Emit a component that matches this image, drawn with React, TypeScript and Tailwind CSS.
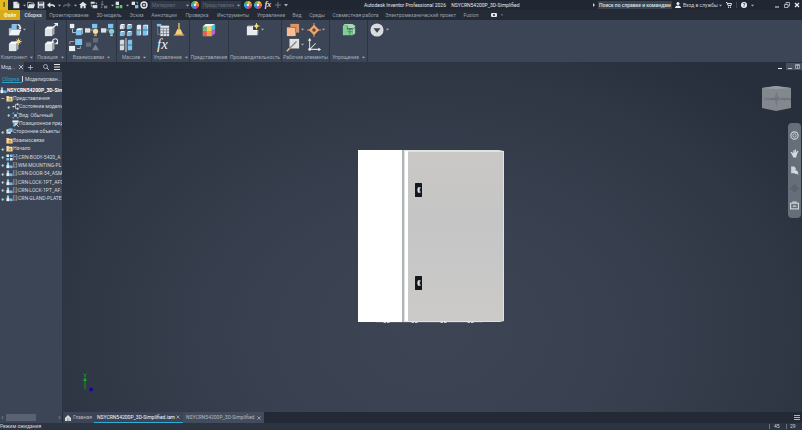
import type { ReactNode } from "react";

type IconProps = { className?: string; box?: string; children: ReactNode };

function Svg({ className = "size-4", box = "0 0 16 16", children }: IconProps) {
  return (
    <svg className={`shrink-0 ${className}`} viewBox={box} fill="none" aria-hidden="true">
      {children}
    </svg>
  );
}

function Caret({ className = "size-1" }: { className?: string }) {
  return (
    <Svg className={className} box="0 0 4 4">
      <path d="M0 1h4L2 3.4z" fill="#aab1bc" />
    </Svg>
  );
}

function Wheel() {
  return (
    <Svg className="size-2" box="0 0 10 10">
      <path d="M5 5V0a5 5 0 0 1 4.4 2.6z" fill="#f2c230" />
      <path d="M5 5l4.400-2.400a5 5 0 0 1 0 4.800z" fill="#ef7d36" />
      <path d="M5 5l4.400 2.400A5 5 0 0 1 5 10z" fill="#d8447c" />
      <path d="M5 5v5A5 5 0 0 1 .6 7.400z" fill="#4c7fe0" />
      <path d="M5 5L.6 7.400a5 5 0 0 1 0-4.800z" fill="#3dbad0" />
      <path d="M5 5L.6 2.600A5 5 0 0 1 5 0z" fill="#62c25a" />
      <circle cx="5" cy="5" r="1.500" fill="#eef1f4" />
    </Svg>
  );
}

function Cube({ x, y, s, c = "#dfe3e6" }: { x: number; y: number; s: number; c?: string }) {
  return (
    <g transform={`translate(${x} ${y}) scale(${s})`}>
      <path d="M0 2.500h7.500V10H0z" fill={c} />
      <path d="M0 2.500L2.500 0H10L7.500 2.500z" fill="#f7f8f9" />
      <path d="M7.500 2.500L10 0v7.500L7.500 10z" fill="#a4abb2" />
    </g>
  );
}

const BLUE = "#7cc4ee";

const quickIcons: { name: string; w: string; art: ReactNode; caret?: boolean }[] = [
  { name: "Создать", w: "w-[15px]", caret: true, art: <><path d="M2 1h6l3 3v7H2z" fill="#e4e7ea" /><path d="M8 1v3h3" stroke="#7f8791" /></> },
  { name: "Открыть", w: "w-[10px]", art: <><path d="M1 10V2h4l1 1h4v2" stroke="#dfe3e7" /><path d="M3 5h9l-2 6H1z" fill="#dfe3e7" /></> },
  { name: "Сохранить", w: "w-[10px]", art: <><path d="M1 1h9l1 1v9H1z" fill="#d8dce0" /><path d="M3 1h6v3H3zM3 7h6v4H3z" fill="#586270" /></> },
  { name: "Отменить", w: "w-4", caret: true, art: <><path d="M3 6h5q3 0 3 3" stroke="#e4e7ea" strokeWidth="2" /><path d="M0 6l5-4v8z" fill="#e4e7ea" /></> },
  { name: "Повторить", w: "w-4", caret: true, art: <><path d="M9 6H4Q1 6 1 9" stroke="#596170" strokeWidth="2" /><path d="M12 6L7 2v8z" fill="#596170" /></> },
  { name: "Главная", w: "w-[11px]", art: <><path d="M0 6l6-5 6 5H10v5H7V8H5v3H2V6z" fill="#dfe3e7" /></> },
  { name: "Копировать", w: "w-[10px]", art: <><path d="M1 1h6v3H1zM4 6h7v5H4z" fill="#d8dce0" /><path d="M2 5v3h2M8 3h2v2" stroke="#d8dce0" /></> },
  { name: "Параметры", w: "w-[15px]", caret: true, art: <><path d="M5 1H3v9H1M1 5h5" stroke="#8d95a0" /><path d="M6 7h5v4H6z" fill="#747d89" /></> },
  { name: "Выбор", w: "w-4", caret: true, art: <><path d="M1 1h5v5H1z" fill="#dbe0e4" /><path d="M1 7h5v4H1zM7 6h4v5H7z" fill="#68bd7a" /></> },
  { name: "Обновить", w: "w-[9px]", art: <><path d="M1 1h5v5H1z" fill="#e4e7ea" /><path d="M6 6h5v5H6z" fill={BLUE} /><path d="M7 2h3v3" stroke={BLUE} /></> },
  { name: "Настройки", w: "w-[10px]", art: <><circle cx="6" cy="6" r="4.500" stroke="#e4e7ea" strokeWidth="2" /><circle cx="6" cy="6" r="1.500" fill="#e4e7ea" /><path d="M6 1v3M6 8v3M1 6h3M8 6h3" stroke="#e4e7ea" /></> },
];

function TitleBar() {
  return (
    <header className="flex h-[10px] items-center bg-[#202632] text-[5px] text-[#c9ced6]">
      <button aria-label="Inventor" className="flex h-[10px] w-2 shrink-0 items-center justify-center bg-[#e6b91e] text-[7px] font-bold text-[#4f3c05]">I</button>
      <div className="ml-1 flex shrink-0 items-center">
        {quickIcons.map((q) => (
          <button key={q.name} aria-label={q.name} className={`flex h-[10px] items-center gap-[3px] ${q.w}`}>
            <Svg className="size-2" box="0 0 12 12">{q.art}</Svg>
            {q.caret && <Caret className="size-[3px]" />}
          </button>
        ))}
      </div>
      <select aria-label="Материал" className="h-2 w-10 shrink-0 appearance-none bg-[#303847] px-[2px] text-[5px] leading-none text-[#626c7b]">
        <option>Материал</option>
      </select>
      <Caret className="-ml-1 size-[3px]" />
      <span className="ml-[2px]"><Wheel /></span>
      <select aria-label="Представление" className="ml-[2px] h-2 w-10 shrink-0 appearance-none bg-[#303847] px-[2px] text-[5px] leading-none text-[#626c7b]">
        <option>Представлен</option>
      </select>
      <Caret className="-ml-1 size-[3px]" />
      <div className="ml-1 flex shrink-0 items-center gap-[2px]">
        <Wheel />
        <Wheel />
        <span className="w-2 text-center font-[Liberation_Serif,serif] text-[8px] leading-none font-bold text-[#e4e7ea] italic">fx</span>
        <Svg className="size-2" box="0 0 8 8"><path d="M4 1v6M1 4h6" stroke="#707986" /></Svg>
        <Caret />
      </div>
      <h1 className="min-w-0 flex-1 pl-[76px] text-[5px] font-normal whitespace-nowrap text-[#e4e7eb]">
        Autodesk Inventor Professional 2026 <span className="ml-1">NSYCRN54200P_3D-Simplified</span>
      </h1>
      <Svg className="mr-[2px] size-1" box="0 0 4 4"><path d="M1 0l2 2-2 2z" fill="#c9ced6" /></Svg>
      <input aria-label="Поиск" defaultValue="Поиск по справке и командам" className="h-2 w-[74px] shrink-0 bg-[#3a4250] px-px text-[5px] leading-none font-medium text-[#dde1e6]" />
      <button className="ml-[3px] flex shrink-0 items-center gap-[2px] whitespace-nowrap">
        <Svg className="size-[6px]" box="0 0 6 6"><circle cx="3" cy="1.500" r="1.500" fill="#eef1f4" /><path d="M0 6q0-2 3-2.500Q6 4 6 6z" fill="#eef1f4" /></Svg>
        <span className="w-[34px] text-left">Вход в службы</span>
        <Caret className="size-[3px]" />
      </button>
      <button aria-label="Магазин" className="ml-1 shrink-0">
        <Svg className="size-[6px]" box="0 0 12 12"><path d="M0 1h2l2 6h6l1-4H3" stroke="#dde1e6" strokeWidth="2" /><circle cx="5" cy="10.500" r="1.300" fill="#dde1e6" /><circle cx="9" cy="10.500" r="1.300" fill="#dde1e6" /></Svg>
      </button>
      <button aria-label="Справка" className="ml-1 flex shrink-0 items-center gap-1 border-l border-[#3d4554] pl-1">
        <span className="flex size-[6px] items-center justify-center rounded-full bg-[#eef1f4] text-[5px] leading-none font-bold text-[#202632]">?</span>
        <Caret className="size-[3px]" />
      </button>
      <div className="ml-5 flex shrink-0 gap-1 pr-[2px]">
        <button aria-label="Свернуть"><Svg className="size-[6px]" box="0 0 6 6"><path d="M1 5h4" stroke="#e4e7ea" /></Svg></button>
        <button aria-label="Восстановить"><Svg className="size-[6px]" box="0 0 6 6"><path d="M2 2V.5h3.500V4H4M.5 2.500H4v3H.5z" stroke="#c9ced6" strokeWidth=".8" /></Svg></button>
        <button aria-label="Закрыть"><Svg className="size-[6px]" box="0 0 6 6"><path d="M1 1l4 4M5 1L1 5" stroke="#f2f4f6" strokeWidth="1.200" /></Svg></button>
      </div>
    </header>
  );
}

const menuTabs: [string, string][] = [
  ["Проектирование", "w-[46px]"],
  ["3D-модель", "w-[34px]"],
  ["Эскиз", "w-[21px]"],
  ["Аннотации", "w-[34px]"],
  ["Проверка", "w-8"],
  ["Инструменты", "w-10"],
  ["Управление", "w-9"],
  ["Вид", "w-4"],
  ["Среды", "w-6"],
  ["Совместная работа", "w-[53px]"],
  ["Электромеханический проект", "w-[77px]"],
  ["Fusion", "w-6"],
];

function MenuTabs() {
  return (
    <nav className="flex h-[10px] items-center bg-[#242a36] text-[5px] text-[#99a1ad]">
      <button className="h-full w-5 shrink-0 bg-[#d8ab18] font-bold text-[#fff4c4]">Файл</button>
      <button className="h-full w-[26px] shrink-0 bg-[#3c4555] font-medium text-[#dfe3e8]">Сборка</button>
      {menuTabs.map(([name, w]) => (
        <button key={name} className={`flex h-full shrink-0 items-center justify-center whitespace-nowrap ${w}`}>{name}</button>
      ))}
      <button aria-label="Видео" className="ml-2 flex items-center gap-1">
        <Svg className="h-1 w-[6px]" box="0 0 6 4"><rect width="6" height="4" rx="1" fill="#e4e7ea" /><circle cx="3" cy="2" r="1" fill="#242a36" /></Svg>
        <Caret className="size-[2px]" />
      </button>
    </nav>
  );
}

type Tool = { name: string; art?: ReactNode; caret?: boolean };
type Group = { label: string; w: string; cols: string; caret?: boolean; tools: Tool[] };

const groups: Group[] = [
  {
    label: "Компонент", w: "w-[35px]", cols: "grid-cols-[20px]", caret: true,
    tools: [
      { name: "Вставить", caret: true, art: <><path d="M1 14V6h5l1 1h6v7z" fill="#bfc5cb" /><path d="M1 14l3-6h11l-3 6z" fill="#f0f2f3" /><path d="M4 2h6v6H4z" fill={BLUE} /><path d="M4 2l1-1h6L10 2z" fill="#b9e2f8" /><path d="M11 2q3 0 3 4" stroke="#f0f2f3" strokeWidth="1.500" /><path d="M11.500 5h4L14 8z" fill="#f0f2f3" /></> },
      { name: "Создать компонент", art: <><Cube x={1} y={4} s={1.100} /><circle cx="12" cy="4" r="2.300" fill="#f4d47c" /><path d="M12 0v8M8 4h8M9.500 1.500l5 5M14.500 1.500l-5 5" stroke="#f4d47c" strokeWidth=".8" /></> },
    ],
  },
  {
    label: "Позиция", w: "w-8", cols: "grid-cols-[16px]", caret: true,
    tools: [
      { name: "Переместить", art: <><Cube x={1} y={4} s={1.100} /><path d="M9 6l5-4" stroke="#eceff1" strokeWidth="1.300" /><path d="M11 0h5v4z" fill="#eceff1" /></> },
      { name: "Повернуть", art: <><Cube x={1} y={4} s={1.100} /><path d="M10 5a3 3 0 1 1 5 1" stroke="#eceff1" strokeWidth="1.300" /><path d="M12 7h4V3z" fill="#eceff1" /></> },
    ],
  },
  {
    label: "Взаимосвязи", w: "w-[50px]", cols: "grid-cols-[16px_16px_16px]", caret: true,
    tools: [
      { name: "Соединение", art: <><path d="M1 1h5v5H1z" fill="#eceff1" /><path d="M4 7v4h6V8" stroke="#cbd1d7" /><Cube x={8} y={6} s={0.800} c={BLUE} /></> },
      { name: "Зависимость", art: <><path d="M0 6h6v5H0z" fill="#dde1e5" /><path d="M8 1h6v5H8z" fill={BLUE} /><path d="M6 8h3" stroke="#b6bec6" /><circle cx="12" cy="9.500" r="3" fill="#f8dc94" /><path d="M10.500 13h3v2h-3z" fill="#c9ae6b" /></> },
      { name: "Показать", art: <><path d="M0 6h6v5H0z" fill="#dde1e5" /><path d="M8 1h6v5H8z" fill={BLUE} /><path d="M6 8h3" stroke="#b6bec6" /><circle cx="12" cy="9.500" r="3" fill="#7ed2db" /><path d="M10.500 13h3v2h-3z" fill="#c6d2d5" /></> },
      { name: "Стык", art: <><path d="M0 9h7v6H0z" fill="#eceff1" /><path d="M7 1h8v7H7z" fill={BLUE} /><path d="M1 7V4h5M9 12h4V9" stroke="#aab2bc" /></> },
      { name: "Скрыть", art: <><path d="M1 5h6v5H1zM9 0h6v5H9z" fill="#626b78" /><path d="M8 14l4-7 4 7z" fill="#77808c" /></> },
    ],
  },
  {
    label: "Массив", w: "w-[35px]", cols: "grid-cols-[16px_16px]", caret: true,
    tools: [
      { name: "Массив", art: <><Cube x={1} y={1} s={0.600} /><Cube x={9} y={1} s={0.600} c={BLUE} /><Cube x={1} y={9} s={0.600} c={BLUE} /><Cube x={9} y={9} s={0.600} c={BLUE} /></> },
      { name: "Зеркало", art: <><path d="M2 3l1-1h4v12H2zM9 3l1-1h5v11l-1 1H9z" fill="#eceff1" /><path d="M2 8h4v6H2zM9 3h5v11H9z" fill={BLUE} /><path d="M2 8h5M9 8h6" stroke="#4b6577" /></> },
      { name: "Копировать", art: <><path d="M1 3l1-1h4v11l-1 1H1z" fill="#d4d9dd" /><path d="M10 3l1-1h4v11l-1 1h-4z" fill={BLUE} /><path d="M1 8h5M10 8h5" stroke="#4b6577" /><path d="M8 0v16" stroke="#eceff1" /></> },
    ],
  },
  {
    label: "Управление", w: "w-[38px]", cols: "grid-cols-[16px_16px]", caret: true,
    tools: [
      { name: "Спецификация", art: <><path d="M1 1h5v3H1z" fill={BLUE} /><path d="M5 3h10v12H5z" fill="#dfe3e6" /><path d="M5 6h10M5 9h10M5 12h10M8.500 6v9M12 6v9M2 5v8h3" stroke="#7d8691" /></> },
      { name: "Очистить", art: <><path d="M7 0h2v7H7z" fill="#d7a652" /><path d="M6 7h4l3 7H3z" fill="#f4cd80" /><path d="M2 13h12v1.500H2z" fill="#c69748" /></> },
      { name: "Параметры fx" },
    ],
  },
  {
    label: "Представления", w: "w-[39px]", cols: "grid-cols-[16px]",
    tools: [
      { name: "Внешний вид", art: <><path d="M1 4h10v11H1z" fill="#eceff1" /><path d="M1 4h5v5H1z" fill="#66c06c" /><path d="M6 4h5v5H6z" fill="#f2d54a" /><path d="M1 9h5v6H1z" fill="#ef5d45" /><path d="M6 9h5v6H6z" fill="#f0a23c" /><path d="M1 4l3-3h11l-4 3z" fill="#f3f5f6" /><path d="M11 4l4-3v6l-4 2z" fill="#4cc3d0" /><path d="M11 9l4-2v5l-4 3z" fill="#c65ad0" /></> },
    ],
  },
  {
    label: "Производительность", w: "w-[53px]", cols: "grid-cols-[20px]",
    tools: [
      { name: "Экспресс-режим", caret: true, art: <><path d="M1 4h6v5h6v5H1z" fill="#e8ebed" /><path d="M1 4l1-1h6v5h6l-1 1H7V4z" fill="#fafbfb" /><path d="M13 9l1-1v5l-1 1z" fill="#a7aeb5" /><circle cx="12" cy="3.500" r="2" fill="#f4df6c" /><path d="M12 0v7M8.500 3.500h7" stroke="#f4df6c" /></> },
    ],
  },
  {
    label: "Рабочие элементы", w: "w-12", cols: "grid-cols-[21px_21px]",
    tools: [
      { name: "Плоскость", caret: true, art: <><path d="M5 1h10v10H5z" fill="#dc9568" /><path d="M1 5h10v10H1z" fill="#f9bd92" /><path d="M5 5h6v6" stroke="#a8643a" /></> },
      { name: "Ось", caret: true, art: <><path d="M8 2l6 6-6 6-6-6z" fill="#f2a46c" /><circle cx="8" cy="8" r="2" fill="#6b4630" /><path d="M8 0v4M8 12v4M0 8h4M12 8h4" stroke="#f2a46c" /></> },
      { name: "Точка", caret: true, art: <><path d="M4 1h11v11H4z" fill="#dfe1e2" /><path d="M1 15L12 4" stroke="#8c8179" strokeWidth="1.500" /><path d="M1 15l3-3" stroke="#f9bd92" strokeWidth="1.500" /></> },
      { name: "ПСК", art: <><path d="M3 1v12h12M3 13l7-7" stroke="#d5dade" strokeWidth="1.200" /><path d="M1 3l2-3 2 3zM13 11l3 2-3 2z" fill="#eceff1" /><circle cx="3" cy="13" r="1.500" fill="#eceff1" /></> },
    ],
  },
  {
    label: "Упрощение", w: "w-[38px]", cols: "grid-cols-[16px]", caret: true,
    tools: [
      { name: "Упростить", art: <><path d="M1 3h5v11H1zM6 7h6v7H6z" fill="#81cf98" /><path d="M1 3l2-2h9l3 2v9l-3 2V6H6V3z" fill="#a5dab4" /><path d="M6 3v4h6M12 7l3-2M6 10h6M9 7v7" stroke="#438c5d" /></> },
    ],
  },
];

function ToolButton({ tool }: { tool: Tool }) {
  return (
    <button aria-label={tool.name} className="flex h-[15px] items-center gap-px pl-px">
      {tool.art ? (
        <Svg className="size-[14px]">{tool.art}</Svg>
      ) : (
        <span className="w-[14px] text-center font-[Liberation_Serif,serif] text-[15px] leading-none text-[#eceff1] italic">fx</span>
      )}
      {tool.caret && <Caret className="size-[3px]" />}
    </button>
  );
}

function Ribbon() {
  return (
    <section aria-label="Лента" className="flex h-[42px] bg-[#3c4555] text-[5px] text-[#a5adb8]">
      {groups.map((g) => (
        <div key={g.label} className={`flex shrink-0 flex-col items-center border-r border-[#2c3441] pt-[2px] ${g.w}`}>
          <div className={`grid h-[30px] content-start justify-center ${g.cols}`}>
            {g.tools.map((t) => <ToolButton key={t.name} tool={t} />)}
          </div>
          <div className="flex items-center gap-[3px] leading-[10px] whitespace-nowrap">
            {g.label}
            {g.caret && <Caret className="size-[3px]" />}
          </div>
        </div>
      ))}
      <div className="pt-[2px] pl-[2px]">
        <button aria-label="Показать панели" className="flex h-[15px] items-center gap-[2px]">
          <Svg className="size-[14px]"><circle cx="8" cy="8" r="7.500" fill="#d9dcdf" /><path d="M4 6h8l-4 5z" fill="#3c4555" /></Svg>
          <Caret className="size-[3px]" />
        </button>
      </div>
    </section>
  );
}

const part = <><path d="M2 1h5v6H2z" fill="#8fd0f2" /><path d="M1 7h7v7H1z" fill="#eef1f4" /><path d="M9 8h6v6H9z" fill="#73b9e4" /></>;
const folder = (mark: string) => <><path d="M1 2h5l1 2h8v11H1z" fill="#f2dca0" /><path d="M6 7h6v6H6z" fill={mark} /></>;

type Node = { text: string; pad: string; sign?: string; art: ReactNode; strong?: boolean };

const nodes: Node[] = [
  { text: "NSYCRN54200P_3D-Sim", pad: "pl-0", art: part, strong: true },
  { text: "Представления", pad: "pl-px", sign: "−", art: folder("#b7a36b") },
  { text: "Состояние модели:", pad: "pl-[7px]", sign: "+", art: <><path d="M3 8h5M13 3H8v10h5" stroke="#e4e8ec" strokeWidth="1.500" /><circle cx="3" cy="8" r="2" fill="#e4e8ec" /><path d="M11 1h4v4h-4zM11 11h4v4h-4z" fill="#e4e8ec" /></> },
  { text: "Вид: Обычный", pad: "pl-[7px]", sign: "+", art: <><path d="M2 5V2h3M11 2h3v3M14 11v3h-3M5 14H2v-3" stroke="#8dcdef" strokeWidth="1.500" /><path d="M4 4l8 8M12 4l-8 8" stroke="#b7dff5" /><circle cx="8" cy="8" r="3" fill="#b7dff5" /></> },
  { text: "Позиционное пред", pad: "pl-[7px]", sign: " ", art: <><path d="M1 1h14v5H1z" fill="#eef1f4" /><path d="M3 7h4v8H3z" fill={BLUE} /><path d="M8 8l7 7M8 8v5M8 8h5" stroke="#eef1f4" strokeWidth="2" /></> },
  { text: "Сторонние объекты", pad: "pl-px", sign: "+", art: <><path d="M1 3h10v10H1z" fill="#e8ecef" /><path d="M6 1h9v8H6z" fill={BLUE} /><path d="M3 10l5-5" stroke="#39798f" strokeWidth="2" /></> },
  { text: "Взаимосвязи", pad: "pl-px", sign: " ", art: folder("#e2953b") },
  { text: "Начало", pad: "pl-px", sign: "+", art: folder("#b7a36b") },
  { text: "[•]:CRN-BODY-5420_A", pad: "pl-px", sign: "+", art: <><path d="M1 1h6v6H1zM9 9h6v6H9z" fill="#eef1f4" /><path d="M9 1h6v6H9zM1 9h6v6H1z" fill={BLUE} /></> },
  { text: "[:]:WM-MOUNTING-PL", pad: "pl-px", sign: "+", art: part },
  { text: "[:]:CRN-DOOR-54_ASM", pad: "pl-px", sign: "+", art: part },
  { text: "[:]:CRN-LOCK-1PT_AF0", pad: "pl-px", sign: "+", art: part },
  { text: "[:]:CRN-LOCK-1PT_AF:", pad: "pl-px", sign: "+", art: part },
  { text: "[:]:CRN-GLAND-PLATE-", pad: "pl-px", sign: "+", art: part },
];

function Browser() {
  return (
    <aside className="flex w-[62px] shrink-0 flex-col overflow-hidden bg-[#3c4555] text-[5px] text-[#d3d8df]">
      <div className="flex h-[10px] items-center bg-[#2a303d]">
        <button className="flex h-full w-6 items-center justify-between bg-[#3c4555] px-px">
          Мод...
          <Svg className="size-1" box="0 0 4 4"><path d="M0 0l4 4M4 0L0 4" stroke="#d3d8df" strokeWidth=".8" /></Svg>
        </button>
        <button aria-label="Добавить" className="ml-1"><Svg className="size-[5px]" box="0 0 5 5"><path d="M2.500 0v5M0 2.500h5" stroke="#b8bfc9" strokeWidth=".8" /></Svg></button>
        <button aria-label="Найти" className="ml-[10px]"><Svg className="size-[6px]" box="0 0 6 6"><circle cx="2.500" cy="2.500" r="2" stroke="#b8bfc9" strokeWidth=".8" /><path d="M4 4l2 2" stroke="#b8bfc9" /></Svg></button>
        <button aria-label="Меню" className="ml-[5px]"><Svg className="size-[6px]" box="0 0 6 6"><path d="M0 .5h6M0 3h6M0 5.500h6" stroke="#e4e8ec" /></Svg></button>
      </div>
      <div className="flex h-[14px] items-center whitespace-nowrap">
        <button className="ml-[2px] w-5 border-b border-[#2fa3c7] text-left leading-[6px] text-[#2fa3c7]">Сборка</button>
        <button className="border-l border-[#d3d8df] pl-[2px] leading-[6px]">Моделирован...</button>
      </div>
      <ul className="grid h-[117px] grid-rows-14">
        {nodes.map((n) => (
          <li key={n.text} className={`flex items-center whitespace-nowrap ${n.pad}`}>
            {n.sign && <span className="w-[5px] shrink-0 text-left text-[6px] leading-none font-bold">{n.sign}</span>}
            <Svg className="size-[7px]">{n.art}</Svg>
            <span className={n.strong ? "font-bold text-white" : ""}>{n.text}</span>
          </li>
        ))}
      </ul>
      <div className="mt-auto mb-[2px] flex h-[7px] items-center px-px">
        <Svg className="size-[3px]" box="0 0 4 4"><path d="M3 0L1 2l2 2" stroke="#8f98a5" /></Svg>
        <div className="ml-[2px] h-full w-[30px] bg-[#596273]" />
        <Svg className="ml-auto size-[3px]" box="0 0 4 4"><path d="M1 0l2 2-2 2" stroke="#8f98a5" /></Svg>
      </div>
    </aside>
  );
}

function Cabinet() {
  return (
    <svg className="h-[176px] w-[148px]" viewBox="0 0 148 176" role="img" aria-label="NSYCRN54200P">
      <defs>
        <linearGradient id="door" x1="0" y1="0" x2="0" y2="1">
          <stop offset="0" stopColor="#c9c8c5" />
          <stop offset=".4" stopColor="#c5c5c6" />
          <stop offset="1" stopColor="#cbcac8" />
        </linearGradient>
      </defs>
      <path d="M0 1h45v172H0z" fill="#fff" />
      <path d="M44 1h97l5 1v170l-4 1H44z" fill="#dfe2e2" />
      <path d="M44 1h2v172h-2z" fill="#aeb5b5" />
      <path d="M47 2h3v170h-3z" fill="#fff" />
      <path d="M50 3h95v169H50z" fill="url(#door)" />
      {[34, 127].map((y) => (
        <g key={y}>
          <rect x="57" y={y} width="7" height="14" rx=".5" fill="#14171c" />
          <path d={`M62.500 ${y + 5}h-2l-.5 2 .5 2h2M60 ${y + 7}h2`} stroke="#dfe1e2" strokeWidth="1.400" fill="none" />
        </g>
      ))}
      <path d="M18 173h107v.8H18z" fill="#5d6570" />
      {[25, 53, 82, 109].map((x) => <path key={x} d={`M${x} 173h3v1h-2zM${x + 4} 173h3l-1 1h-2z`} fill="#cdd1d2" />)}
    </svg>
  );
}

const navItems: { name: string; art: ReactNode }[] = [
  { name: "Штурвал", art: <><circle cx="8" cy="8" r="6.500" stroke="#cfd3d8" strokeWidth="2" /><circle cx="8" cy="8" r="3" stroke="#cfd3d8" strokeWidth="1.500" /></> },
  { name: "Панорама", art: <path d="M3 9L1 6l2-1 3 3V2h2v5l1-6h2l-1 6 3-4 2 1-3 6-1 5H6z" fill="#d7dbdf" /> },
  { name: "Масштаб", art: <><path d="M2 1h6l2 3v9H2z" fill="#cfd3d8" /><circle cx="11" cy="11" r="3" fill="#dfe2e5" /><path d="M13 13l2 2" stroke="#cfd3d8" strokeWidth="2" /></> },
  { name: "Орбита", art: <path d="M8 1l3 4 4 3-4 3-3 4-3-4-4-3 4-3zM6 6h4v4H6z" stroke="#505966" strokeWidth="1.500" /> },
  { name: "Вид", art: <><rect x="1" y="4" width="14" height="10" stroke="#cfd3d8" strokeWidth="2" /><path d="M4 2h8M5 9h6" stroke="#cfd3d8" strokeWidth="2" /></> },
];

function Viewport() {
  return (
    <main className="relative flex min-h-0 flex-1 items-center justify-center bg-[radial-gradient(ellipse_62%_95%_at_50%_78%,#3d4554_0%,#394150_40%,#303745_75%,#282f3c_100%)]">
      <Cabinet />
      <div className="absolute top-px right-0 flex h-[7px] items-center gap-1 text-[#d3d8df]">
        <button aria-label="Свернуть окно"><Svg className="size-1" box="0 0 4 4"><path d="M0 3.500h4" stroke="#eef1f4" /></Svg></button>
        <div className="flex h-full w-4 items-center justify-around bg-[#485162]">
          <button aria-label="Уменьшить"><Svg className="size-1" box="0 0 4 4"><path d="M0 3.500h4" stroke="#c2c8d0" /></Svg></button>
          <button aria-label="Развернуть"><Svg className="size-[5px]" box="0 0 5 5"><path d="M.5.5h4v4h-4zM2.500.5v4M.5 1.500h4" stroke="#aab2bd" strokeWidth=".8" /></Svg></button>
        </div>
      </div>
      <svg className="absolute top-6 right-[11px] h-[25px] w-[29px]" viewBox="0 0 29 25" role="img" aria-label="Видовой куб">
        <path d="M0 2L14 0l15 2v20l-15 3L0 22z" fill="#83888f" />
        <path d="M0 2L14 0l15 2-15 1z" fill="#989ca2" />
        <path d="M14.500 5l2 7-2 9-2-9z" fill="#757a82" />
        <text x="2" y="14" fontSize="4" fill="#575d66">Слева</text>
        <text x="15" y="14" fontSize="4" fill="#575d66">Сперед</text>
      </svg>
      <div className="absolute top-[61px] right-px flex h-[95px] w-[13px] flex-col items-center justify-between rounded-sm bg-[#666e7a] py-2">
        {navItems.map((n) => (
          <button key={n.name} aria-label={n.name}><Svg className="size-[9px]">{n.art}</Svg></button>
        ))}
      </div>
      <svg className="absolute bottom-5 left-5 h-[20px] w-3" viewBox="0 0 12 20" role="img" aria-label="Оси координат">
        <path d="M3 7v10" stroke="#159522" />
        <path d="M1 9l2-4 2 4z" fill="#16a824" />
        <path d="M1.500 1L3 3l1.500-2M3 3v2" stroke="#16a824" />
        <path d="M3 17.500h4" stroke="#223a8a" />
        <circle cx="9" cy="17.500" r="2" fill="#1207a8" />
      </svg>
    </main>
  );
}

function Close() {
  return <Svg className="size-1" box="0 0 4 4"><path d="M.5.5l3 3M3.500.5l-3 3" stroke="#a8b0bb" strokeWidth=".8" /></Svg>;
}

function DocumentTabs() {
  return (
    <nav className="flex h-[11px] shrink-0 items-center bg-[#232a35] text-[5px] whitespace-nowrap text-[#b2b9c4]">
      <button className="ml-px flex h-full w-[31px] items-center gap-[2px] bg-[#3c4555] pl-[2px]">
        <Svg className="size-[6px]" box="0 0 12 12"><path d="M0 6l6-6 6 6v6H0z" fill="#d9dde2" /><path d="M4 7h1v5M8 7v5" stroke="#5a6372" /></Svg>
        Главная
      </button>
      <button className="flex h-full w-[89px] items-center justify-between border-b border-[#2eaed6] bg-[#3c4555] px-[3px] text-[#f6f8fa]">
        NSYCRN54200P_3D-Simplified.iam <Close />
      </button>
      <button className="flex h-full w-[81px] items-center justify-between bg-[#434c5d] px-[3px]">
        NSYCRN54200P_3D-Simplified <Close />
      </button>
      <button aria-label="Список документов" className="mr-[2px] ml-auto"><Svg className="size-[6px]" box="0 0 6 6"><path d="M0 .5h6M0 2.500h6M0 4.500h6" stroke="#aeb5c0" /></Svg></button>
    </nav>
  );
}

export default function App() {
  return (
    <div className="flex h-screen flex-col overflow-hidden bg-[#232a35] font-[Roboto,'Noto_Sans',sans-serif] leading-none">
      <TitleBar />
      <MenuTabs />
      <Ribbon />
      <div className="flex min-h-0 flex-1">
        <Browser />
        <div className="flex min-w-0 flex-1 flex-col">
          <Viewport />
          <DocumentTabs />
        </div>
      </div>
      <footer className="flex h-[7px] shrink-0 items-center bg-[#2d3441] text-[5px] text-[#d3d8df]">
        <span>Режим ожидания</span>
        <span className="ml-auto w-[17px] border-l border-[#6b7482] pl-1">45</span>
        <span className="w-4 border-l border-[#6b7482] pl-[3px]">29</span>
      </footer>
    </div>
  );
}
